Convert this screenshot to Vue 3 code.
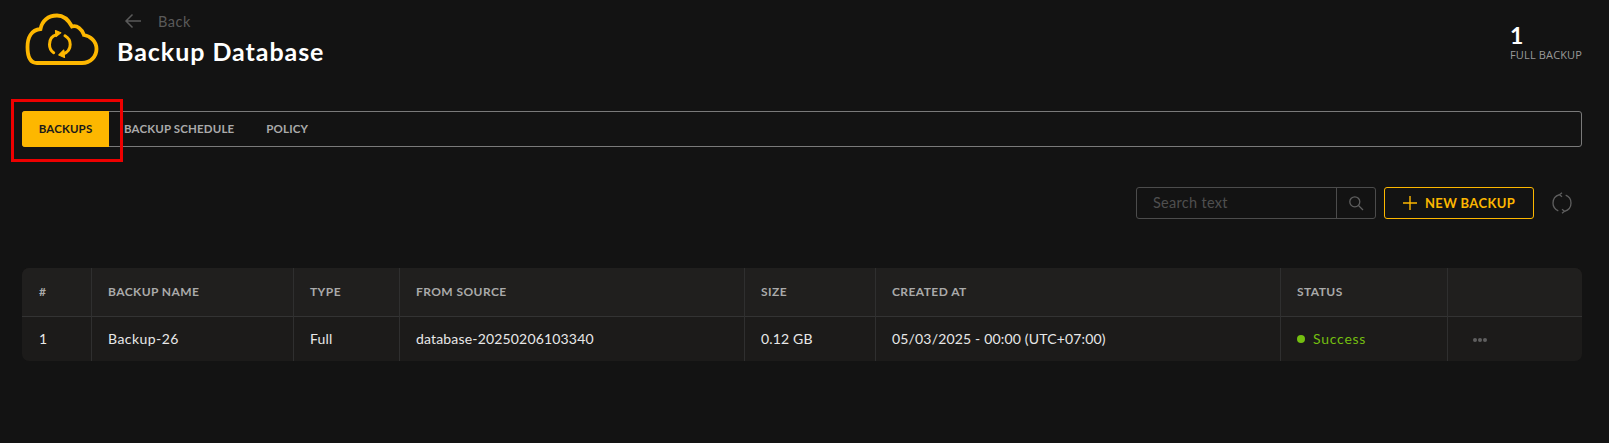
<template>
  <div class="page">
    <header class="top">
      <svg class="logo" viewBox="8 7 76 54" width="76" height="54" fill="none" stroke="#fdb700" stroke-width="3.8">
        <path d="M22 58H67C76 58 81.500 51 81.500 44C81.500 36 75 31 69 30C67 24 62 20 57 21.500C53 14 47 10.500 42 10.500C33 10.500 27 16 25.500 24C16 25 12.500 33 12.500 42C12.500 51 15 58 22 58Z" />
        <path d="M41.500 29.800C37 31 34.500 35 34.500 39.500C34.500 43 36 46 38.700 47.700" stroke-width="3" stroke-linecap="round" />
        <path d="M50 30.800C53 32.500 55.200 35.500 55.200 39.500C55.200 44 52.500 47.500 48 49" stroke-width="3" stroke-linecap="round" />
        <path d="M40.500 25.500L45.800 27.800L41 31.500Z" fill="#fdb700" stroke-width="1.200" stroke-linejoin="round" />
        <path d="M48.800 45L43.800 50L49.500 52.500Z" fill="#fdb700" stroke-width="1.200" stroke-linejoin="round" />
      </svg>
      <div class="heading">
        <div class="back">
          <svg viewBox="0 0 18 16" width="18" height="16" fill="none" stroke="#5a5a5a" stroke-width="1.500">
            <path d="M17 8H2M8.500 1.500L2 8L8.500 14.500" />
          </svg>
          <span>Back</span>
        </div>
        <h1>Backup Database</h1>
      </div>
      <div class="stat">
        <strong>1</strong>
        <span>FULL BACKUP</span>
      </div>
    </header>

    <nav class="tabs">
      <a class="tab active">BACKUPS</a>
      <a class="tab second">BACKUP SCHEDULE</a>
      <a class="tab third">POLICY</a>
    </nav>
    <div class="callout"></div>

    <div class="toolbar">
      <div class="search">
        <span class="placeholder">Search text</span>
        <span class="search-btn">
          <svg viewBox="0 0 16 16" width="16" height="16" fill="none" stroke="#5f5f5f" stroke-width="1.300">
            <circle cx="6.800" cy="6.800" r="5" />
            <path d="M10.500 10.500L15 15" />
          </svg>
        </span>
      </div>
      <button class="new">
        <svg viewBox="0 0 14 14" width="14" height="14" fill="none" stroke="#fdb700" stroke-width="1.400">
          <path d="M7 0V14M0 7H14" />
        </svg>
        NEW BACKUP
      </button>
      <svg class="refresh" viewBox="0 0 20 20" width="20" height="20" fill="none" stroke="#5f5f5f" stroke-width="1.300">
        <path d="M7.500 1.600C3.800 2.700 1 6 1 10C1 13.500 3.200 16.500 6.300 17.800" />
        <path d="M12.500 18.400C16.200 17.300 19 14 19 10C19 6.500 16.800 3.500 13.700 2.200" />
        <path d="M10 -0.300L7.500 1.700L10 3.700M10 16.300L12.500 18.300L10 20.300" />
      </svg>
    </div>

    <table class="grid">
      <colgroup>
        <col v-for="w in widths" :key="w" :style="{ width: w + 'px' }" />
      </colgroup>
      <thead>
        <tr>
          <th v-for="h in heads" :key="h">{{ h }}</th>
        </tr>
      </thead>
      <tbody>
        <tr>
          <td>1</td>
          <td class="name">Backup-26</td>
          <td>Full</td>
          <td>database-20250206103340</td>
          <td>0.12 GB</td>
          <td>05/03/2025 - 00:00 (UTC+07:00)</td>
          <td class="ok"><i class="dot"></i>Success</td>
          <td class="more"><b></b><b></b><b></b></td>
        </tr>
      </tbody>
    </table>
  </div>
</template>

<script setup>
const widths = [69, 202, 106, 345, 131, 405, 167, 135]
const heads = ['#', 'BACKUP NAME', 'TYPE', 'FROM SOURCE', 'SIZE', 'CREATED AT', 'STATUS', '']
</script>

<style>
html, body { margin: 0; background: #131313; }
</style>

<style scoped>
.page {
  position: relative;
  box-sizing: border-box;
  width: 1609px;
  height: 443px;
  padding: 0 27px 0 22px;
  background: #131313;
  font-family: Lato, "Noto Sans", sans-serif;
  color: #eee;
  overflow: hidden;
}
.top {
  display: flex;
  align-items: flex-start;
  height: 111px;
}
.logo {
  margin: 12px 18px 0 1px;
  flex: none;
  width: 76px;
  height: 54px;
}
.heading { padding-top: 12px; }
.back {
  display: flex;
  align-items: center;
  gap: 16px;
  height: 18px;
  margin-left: 7px;
  font-size: 14.500px;
  color: #5a5a5a;
  letter-spacing: .5px;
}
h1 {
  margin: 6px 0 0 0;
  font-size: 25px;
  line-height: 30px;
  font-weight: 700;
  color: #fff;
  letter-spacing: .95px;
  white-space: nowrap;
}
.stat {
  margin-left: auto;
  width: 72px;
  padding-top: 23px;
  display: flex;
  flex-direction: column;
}
.stat strong {
  font-size: 23px;
  line-height: 25px;
  color: #fff;
}
.stat span {
  font-family: "Open Sans", sans-serif;
  font-size: 11px;
  line-height: 14px;
  letter-spacing: .15px;
  color: #9a9a9a;
  white-space: nowrap;
}
.tabs {
  box-sizing: border-box;
  display: flex;
  align-items: stretch;
  height: 36px;
  border: 1px solid #7a7a7a;
  border-radius: 3px;
}
.tab {
  display: flex;
  align-items: center;
  font-size: 11.500px;
  font-weight: 700;
  letter-spacing: .15px;
  line-height: 32px;
  color: #aaa;
  white-space: nowrap;
}
.tab.active {
  width: 87px;
  justify-content: center;
  margin: -1px 0 -1px -1px;
  background: #fdb700;
  color: #1a1a1a;
  border-radius: 3px 0 0 3px;
}
.second { margin-left: 15px; }
.third { margin-left: 32px; }
.callout {
  position: absolute;
  left: 11px;
  top: 99px;
  width: 112px;
  height: 63px;
  box-sizing: border-box;
  border: 3px solid #ee0000;
}
.toolbar {
  display: flex;
  align-items: center;
  justify-content: flex-end;
  margin-top: 40px;
  height: 32px;
}
.search {
  box-sizing: border-box;
  display: flex;
  width: 240px;
  height: 32px;
  border: 1px solid #4c4c4c;
  border-radius: 3px;
}
.placeholder {
  flex: 1;
  padding-left: 16px;
  font-size: 14.500px;
  line-height: 30px;
  letter-spacing: .3px;
  color: #4f4f4f;
}
.search-btn {
  box-sizing: border-box;
  width: 39px;
  display: flex;
  align-items: center;
  justify-content: center;
  border-left: 1px solid #4c4c4c;
}
.new {
  box-sizing: border-box;
  display: flex;
  align-items: center;
  justify-content: center;
  gap: 8px;
  width: 150px;
  height: 32px;
  margin-left: 8px;
  background: transparent;
  border: 1px solid #fdb700;
  border-radius: 3px;
  color: #fdb700;
  font: 700 13px Lato, sans-serif;
  letter-spacing: .35px;
}
.refresh {
  margin: 0 10px 0 18px;
  overflow: visible;
}
.grid {
  table-layout: fixed;
  width: 1560px;
  margin-top: 49px;
  border-collapse: separate;
  border-spacing: 0;
  background: #1c1b1a;
  border-radius: 7px;
  overflow: hidden;
}
th, td {
  box-sizing: border-box;
  padding: 0 0 0 16px;
  text-align: left;
  border-left: 1px solid #2f2f2f;
  white-space: nowrap;
}
th:first-child, td:first-child { border-left: 0; padding-left: 17px; }
th {
  height: 49px;
  background: #201f1e;
  border-bottom: 1px solid #333;
  font-size: 12px;
  font-weight: 700;
  letter-spacing: .42px;
  color: #aaa;
  padding-bottom: 2px;
}
td {
  height: 44px;
  font-size: 14px;
  letter-spacing: .17px;
  color: #e8e8e8;
  padding-bottom: 2px;
}
td.name { letter-spacing: .45px; }
td.ok { color: #74bf10; letter-spacing: .75px; }
.dot {
  display: inline-block;
  width: 8px;
  height: 8px;
  margin-right: 8px;
  border-radius: 50%;
  background: #74bf10;
  vertical-align: 1px;
}
.more b {
  display: inline-block;
  width: 4px;
  height: 4px;
  margin-right: 1px;
  border-radius: 50%;
  background: #5f5f5f;
  vertical-align: middle;
}
td.more { padding-left: 25px; }
</style>
